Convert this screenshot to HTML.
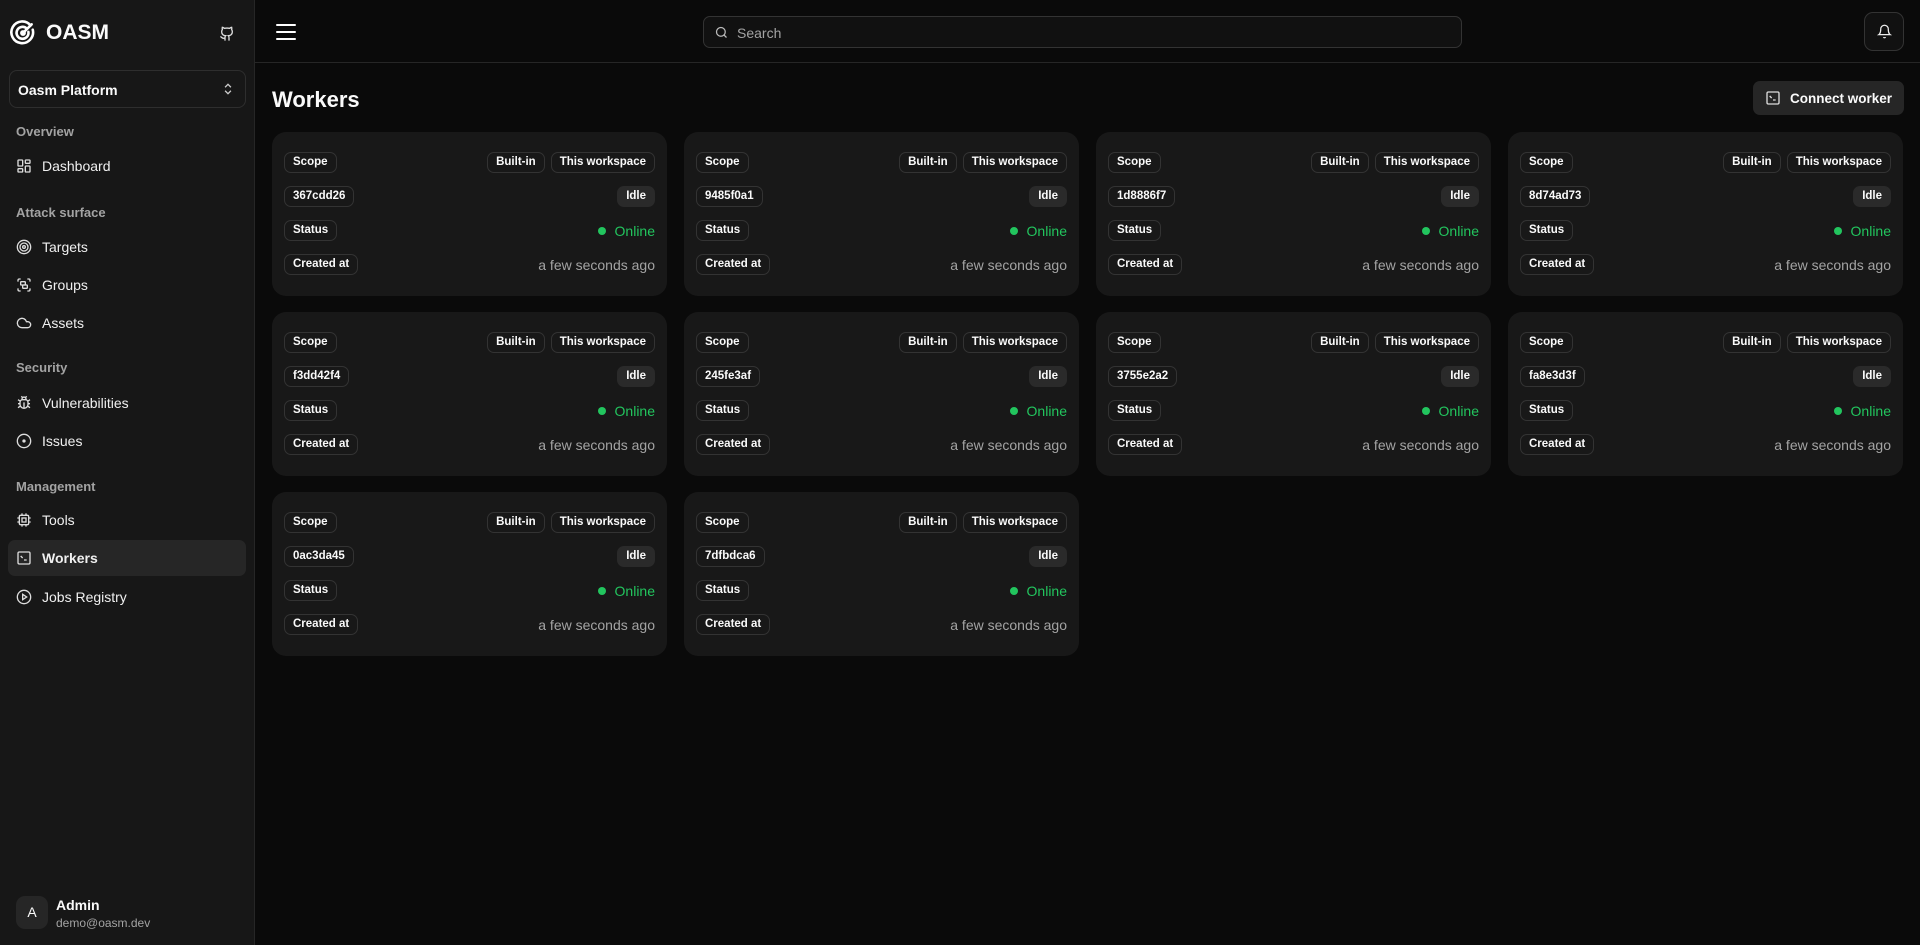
<!DOCTYPE html>
<html><head><meta charset="utf-8"><style>
*{box-sizing:border-box;margin:0;padding:0}
body{width:1920px;height:945px;background:#0a0a0a;font-family:"Liberation Sans",sans-serif;color:#fafafa;overflow:hidden;position:relative}
.side{position:absolute;left:0;top:0;width:255px;height:945px;background:#171717;border-right:1px solid #262626}
.abs{position:absolute}
.logo{left:10px;top:20px;display:flex;align-items:center;gap:10px;font-weight:bold;font-size:21px}
.sel{left:9px;top:70px;width:237px;height:38px;border:1px solid #2e2e2e;border-radius:8px;font-weight:bold;font-size:14px;padding:11px 8px}
.lbl{left:16px;font-size:13px;font-weight:bold;color:#a3a3a3}
.item{left:8px;width:238px;height:35px;display:flex;align-items:center;gap:10px;padding-left:8px;font-size:14px;color:#f0f0f0;border-radius:7px}
.item svg{width:16px;height:16px}
.act{background:#262626;font-weight:bold}
.hdr{position:absolute;left:255px;top:0;right:0;height:63px;border-bottom:1px solid #262626}
.search{left:703px;top:16px;width:759px;height:32px;border:1px solid #333;border-radius:7px;background:#111;font-size:14px;color:#a3a3a3;padding:8px 0 0 33px}
.bell{left:1864px;top:12px;width:40px;height:39px;border:1px solid #333;border-radius:9px;background:#111}
h1{position:absolute;left:272px;top:87px;font-size:22px;font-weight:bold}
.btn{right:16px;top:81px;height:34px;background:#262626;border-radius:7px;font-size:13.5px;font-weight:bold;display:flex;align-items:center;gap:9px;padding:0 12px;white-space:nowrap}
.card{position:absolute;width:395px;height:164px;background:#181818;border-radius:14px;padding:20px 12px}
.row{display:flex;justify-content:space-between;align-items:center;height:21px;margin-bottom:13px}
.b{display:inline-block;height:21px;line-height:19px;border:1px solid #333;border-radius:7px;padding:0 8px;font-size:11.5px;font-weight:bold;margin-left:6px}
.row>.b:first-child{margin-left:0}
.idle{background:#2a2a2a;border-color:#2a2a2a}
.on{color:#22c55e;font-size:14px;display:flex;align-items:center;gap:9px}
.on i{width:8px;height:8px;border-radius:50%;background:#22c55e}
.ago{color:#a3a3a3;font-size:14px}
</style></head><body>
<div class="side">
<div class="abs logo"><svg width="26" height="26" viewBox="0 0 24 24" fill="none" stroke="#fff" stroke-width="2.4" stroke-linecap="round"><path d="M19 5A10 10 0 1 0 21 9"/><path d="M15.5 8A5.5 5.5 0 1 0 17 11"/><path d="M12 12l8-8"/><circle cx="12" cy="12" r="1.5"/></svg>OASM</div>
<svg class="abs" style="left:219px;top:26px" width="16" height="16" viewBox="0 0 24 24" fill="none" stroke="#ddd" stroke-width="2"><path d="M15 22v-4a4.8 4.8 0 0 0-1-3.5c3 0 6-2 6-5.5.08-1.25-.27-2.48-1-3.5.28-1.15.28-2.35 0-3.5 0 0-1 0-3 1.5-2.64-.5-5.36-.5-8 0C6 2 5 2 5 2c-.3 1.15-.3 2.35 0 3.5A5.4 5.4 0 0 0 4 9c0 3.5 3 5.5 6 5.5-.39.49-.68 1.05-.85 1.65S8.93 17.38 9 18v4"/><path d="M9 18c-4.51 2-5-2-7-2"/></svg>
<div class="abs sel">Oasm Platform<svg style="position:absolute;right:10px;top:11px" width="14" height="14" viewBox="0 0 24 24" fill="none" stroke="#ccc" stroke-width="2.2"><path d="m7 9 5-5 5 5M7 15l5 5 5-5"/></svg></div>
<div class="abs lbl" style="top:124px">Overview</div>
<div class="abs item" style="top:148px"><svg viewBox="0 0 24 24" fill="none" stroke="#ddd" stroke-width="2"><rect x="3" y="3" width="7" height="9" rx="1"/><rect x="14" y="3" width="7" height="5" rx="1"/><rect x="14" y="12" width="7" height="9" rx="1"/><rect x="3" y="16" width="7" height="5" rx="1"/></svg>Dashboard</div>
<div class="abs lbl" style="top:205px">Attack surface</div>
<div class="abs item" style="top:229px"><svg viewBox="0 0 24 24" fill="none" stroke="#ddd" stroke-width="2"><circle cx="12" cy="12" r="10"/><circle cx="12" cy="12" r="6"/><circle cx="12" cy="12" r="2"/></svg>Targets</div>
<div class="abs item" style="top:267px"><svg viewBox="0 0 24 24" fill="none" stroke="#ddd" stroke-width="2"><path d="M3 7V5a2 2 0 0 1 2-2h2M17 3h2a2 2 0 0 1 2 2v2M21 17v2a2 2 0 0 1-2 2h-2M7 21H5a2 2 0 0 1-2-2v-2"/><rect x="7" y="7" width="7" height="5" rx="1"/><rect x="10" y="12" width="7" height="5" rx="1"/></svg>Groups</div>
<div class="abs item" style="top:305px"><svg viewBox="0 0 24 24" fill="none" stroke="#ddd" stroke-width="2"><path d="M17.5 19H9a7 7 0 1 1 6.7-9h1.8a4.5 4.5 0 1 1 0 9Z"/></svg>Assets</div>
<div class="abs lbl" style="top:360px">Security</div>
<div class="abs item" style="top:385px"><svg viewBox="0 0 24 24" fill="none" stroke="#ddd" stroke-width="2"><path d="m8 2 1.9 1.9M14.1 3.9 16 2M9 7.1v-1a3 3 0 1 1 6 0v1"/><path d="M12 20c-3.3 0-6-2.7-6-6v-3a4 4 0 0 1 4-4h4a4 4 0 0 1 4 4v3c0 3.3-2.7 6-6 6M12 20v-9M6.5 13H3M21 13h-3.5M6 17l-3 2M18 17l3 2M6 9 3 7M18 9l3-2"/></svg>Vulnerabilities</div>
<div class="abs item" style="top:423px"><svg viewBox="0 0 24 24" fill="none" stroke="#ddd" stroke-width="2"><circle cx="12" cy="12" r="10"/><circle cx="12" cy="12" r="1.5" fill="#ddd"/></svg>Issues</div>
<div class="abs lbl" style="top:479px">Management</div>
<div class="abs item" style="top:502px"><svg viewBox="0 0 24 24" fill="none" stroke="#ddd" stroke-width="2"><rect x="5" y="5" width="14" height="14" rx="2"/><rect x="9" y="9" width="6" height="6"/><path d="M9 2v3M15 2v3M9 19v3M15 19v3M2 9h3M2 15h3M19 9h3M19 15h3"/></svg>Tools</div>
<div class="abs item act" style="top:540px;height:36px"><svg viewBox="0 0 24 24" fill="none" stroke="#ddd" stroke-width="2"><rect x="3" y="3" width="18" height="18" rx="2"/><path d="m7 9 3 3M12 15h4"/></svg>Workers</div>
<div class="abs item" style="top:579px"><svg viewBox="0 0 24 24" fill="none" stroke="#ddd" stroke-width="2"><circle cx="12" cy="12" r="10"/><path d="m10 8 6 4-6 4z"/></svg>Jobs Registry</div>
<div class="abs" style="left:16px;top:896px;width:32px;height:33px;background:#262626;border-radius:9px;font-size:14px;text-align:center;line-height:33px">A</div>
<div class="abs" style="left:56px;top:897px;font-size:14px;font-weight:bold">Admin</div>
<div class="abs" style="left:56px;top:916px;font-size:12px;color:#a3a3a3">demo@oasm.dev</div>
</div>
<div class="hdr"></div>
<svg class="abs" style="left:274px;top:20px" width="24" height="24" viewBox="0 0 24 24" fill="none" stroke="#fff" stroke-width="2" stroke-linecap="round"><path d="M3 5h18M3 12h18M3 19h18"/></svg>
<div class="abs search">Search<svg style="position:absolute;left:10px;top:8px" width="15" height="15" viewBox="0 0 24 24" fill="none" stroke="#bbb" stroke-width="2"><circle cx="11" cy="11" r="7"/><path d="m20 20-4-4"/></svg></div>
<div class="abs bell"><svg style="position:absolute;left:12px;top:11px" width="15" height="15" viewBox="0 0 24 24" fill="none" stroke="#eee" stroke-width="2"><path d="M6 8a6 6 0 0 1 12 0c0 7 3 9 3 9H3s3-2 3-9M10.3 21a1.9 1.9 0 0 0 3.4 0"/></svg></div>
<h1>Workers</h1>
<div class="abs btn"><svg width="16" height="16" viewBox="0 0 24 24" fill="none" stroke="#ddd" stroke-width="2"><rect x="3" y="3" width="18" height="18" rx="2"/><path d="m7 9 3 3M12 15h4"/></svg>Connect worker</div>
<div class="card" style="left:272px;top:132px"><div class="row"><span class="b">Scope</span><span><span class="b">Built-in</span><span class="b">This workspace</span></span></div><div class="row"><span class="b">367cdd26</span><span class="b idle">Idle</span></div><div class="row"><span class="b">Status</span><span class="on"><i></i>Online</span></div><div class="row"><span class="b">Created at</span><span class="ago">a few seconds ago</span></div></div>
<div class="card" style="left:684px;top:132px"><div class="row"><span class="b">Scope</span><span><span class="b">Built-in</span><span class="b">This workspace</span></span></div><div class="row"><span class="b">9485f0a1</span><span class="b idle">Idle</span></div><div class="row"><span class="b">Status</span><span class="on"><i></i>Online</span></div><div class="row"><span class="b">Created at</span><span class="ago">a few seconds ago</span></div></div>
<div class="card" style="left:1096px;top:132px"><div class="row"><span class="b">Scope</span><span><span class="b">Built-in</span><span class="b">This workspace</span></span></div><div class="row"><span class="b">1d8886f7</span><span class="b idle">Idle</span></div><div class="row"><span class="b">Status</span><span class="on"><i></i>Online</span></div><div class="row"><span class="b">Created at</span><span class="ago">a few seconds ago</span></div></div>
<div class="card" style="left:1508px;top:132px"><div class="row"><span class="b">Scope</span><span><span class="b">Built-in</span><span class="b">This workspace</span></span></div><div class="row"><span class="b">8d74ad73</span><span class="b idle">Idle</span></div><div class="row"><span class="b">Status</span><span class="on"><i></i>Online</span></div><div class="row"><span class="b">Created at</span><span class="ago">a few seconds ago</span></div></div>
<div class="card" style="left:272px;top:312px"><div class="row"><span class="b">Scope</span><span><span class="b">Built-in</span><span class="b">This workspace</span></span></div><div class="row"><span class="b">f3dd42f4</span><span class="b idle">Idle</span></div><div class="row"><span class="b">Status</span><span class="on"><i></i>Online</span></div><div class="row"><span class="b">Created at</span><span class="ago">a few seconds ago</span></div></div>
<div class="card" style="left:684px;top:312px"><div class="row"><span class="b">Scope</span><span><span class="b">Built-in</span><span class="b">This workspace</span></span></div><div class="row"><span class="b">245fe3af</span><span class="b idle">Idle</span></div><div class="row"><span class="b">Status</span><span class="on"><i></i>Online</span></div><div class="row"><span class="b">Created at</span><span class="ago">a few seconds ago</span></div></div>
<div class="card" style="left:1096px;top:312px"><div class="row"><span class="b">Scope</span><span><span class="b">Built-in</span><span class="b">This workspace</span></span></div><div class="row"><span class="b">3755e2a2</span><span class="b idle">Idle</span></div><div class="row"><span class="b">Status</span><span class="on"><i></i>Online</span></div><div class="row"><span class="b">Created at</span><span class="ago">a few seconds ago</span></div></div>
<div class="card" style="left:1508px;top:312px"><div class="row"><span class="b">Scope</span><span><span class="b">Built-in</span><span class="b">This workspace</span></span></div><div class="row"><span class="b">fa8e3d3f</span><span class="b idle">Idle</span></div><div class="row"><span class="b">Status</span><span class="on"><i></i>Online</span></div><div class="row"><span class="b">Created at</span><span class="ago">a few seconds ago</span></div></div>
<div class="card" style="left:272px;top:492px"><div class="row"><span class="b">Scope</span><span><span class="b">Built-in</span><span class="b">This workspace</span></span></div><div class="row"><span class="b">0ac3da45</span><span class="b idle">Idle</span></div><div class="row"><span class="b">Status</span><span class="on"><i></i>Online</span></div><div class="row"><span class="b">Created at</span><span class="ago">a few seconds ago</span></div></div>
<div class="card" style="left:684px;top:492px"><div class="row"><span class="b">Scope</span><span><span class="b">Built-in</span><span class="b">This workspace</span></span></div><div class="row"><span class="b">7dfbdca6</span><span class="b idle">Idle</span></div><div class="row"><span class="b">Status</span><span class="on"><i></i>Online</span></div><div class="row"><span class="b">Created at</span><span class="ago">a few seconds ago</span></div></div>
</body></html>
